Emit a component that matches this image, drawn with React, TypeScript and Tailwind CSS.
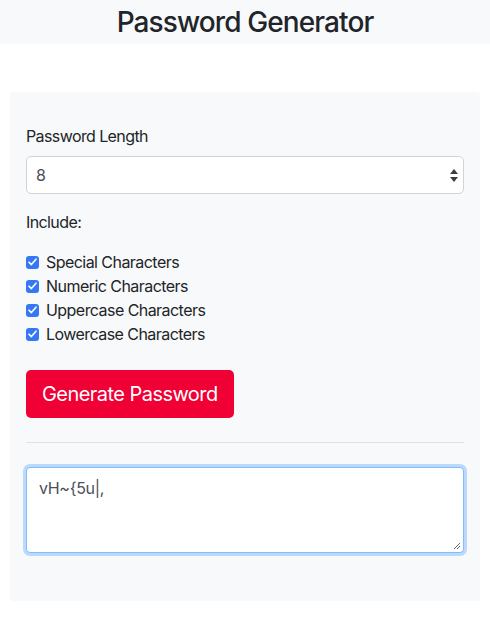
import React from "react";

export default function App() {
  const items = [
    "Special Characters",
    "Numeric Characters",
    "Uppercase Characters",
    "Lowercase Characters",
  ];
  return (
    <div className="min-h-[619px] bg-white text-[#212529]" style={{ fontFamily: "Inter, 'Noto Sans', sans-serif" }}>
      <header className="h-[44px] bg-[#f8f9fa] flex items-center justify-center">
        <h1 className="text-[28px] font-medium leading-none tracking-[-0.9px]">Password Generator</h1>
      </header>
      <div className="px-[10px] pt-[48px]">
        <div className="bg-[#f8f9fa] rounded-[4px] px-[16px] pt-[32px] pb-[48px]">
          <label className="block text-[16px] leading-[24px] mb-[8px] tracking-[-0.6px]">Password Length</label>
          <div className="relative h-[38px] bg-white border border-[#ced4da] rounded-[5px] flex items-center pl-[9px] mb-[16px]">
            <span className="text-[16px] text-[#495057]">8</span>
            <svg className="absolute right-[5px] top-[12px]" width="8" height="13" viewBox="0 0 8 13">
              <path d="M4 0 L8 5 L0 5 Z" fill="#3a3f44" />
              <path d="M0 8 L8 8 L4 13 Z" fill="#3a3f44" />
            </svg>
          </div>
          <div className="text-[16px] leading-[24px] mb-[16px] tracking-[-0.6px]">Include:</div>
          <div className="flex flex-col">
            {items.map((t) => (
              <label key={t} className="flex items-center h-[24px] text-[16px] tracking-[-0.55px]">
                <span className="w-[13px] h-[13px] rounded-[3px] bg-[#3478f6] flex items-center justify-center mr-[7px]">
                  <svg width="9" height="8" viewBox="0 0 9 8">
                    <path d="M1 4.2 L3.4 6.6 L8 1.2" stroke="white" strokeWidth="1.6" fill="none" strokeLinecap="round" strokeLinejoin="round" />
                  </svg>
                </span>
                {t}
              </label>
            ))}
          </div>
          <button className="mt-[24px] h-[48px] px-[16px] rounded-[5px] bg-[#f00034] text-white text-[20px] tracking-[-0.55px]">
            Generate Password
          </button>
          <div className="mt-[24px] border-t border-[#dfe0e1]" />
          <div className="mt-[24px] h-[86px] bg-white border border-[#80bdff] rounded-[4px] shadow-[0_0_0_3px_rgba(0,123,255,0.25)] relative pl-[12px] pt-[8px]">
            <span className="text-[16px] text-[#495057] tracking-[-0.3px]">vH~{"{"}5u|,</span>
            <svg className="absolute right-[2px] bottom-[2px]" width="8" height="8" viewBox="0 0 8 8">
              <path d="M7 1 L1 7 M7 4 L4 7" stroke="#666" strokeWidth="1" />
            </svg>
          </div>
        </div>
      </div>
    </div>
  );
}
